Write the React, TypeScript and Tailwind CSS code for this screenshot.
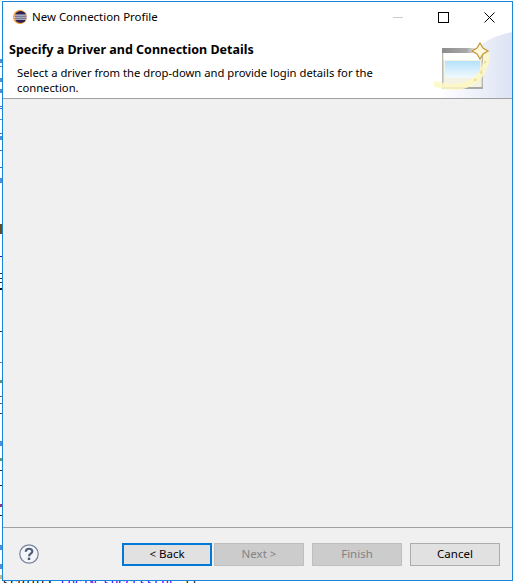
const font = "font-['Noto_Sans','Open_Sans',sans-serif]";

// bits of the editor behind the dialog, showing in the gap left of the window
const behind: { y: number; h: number; color: string }[] = [
  { y: 59, h: 4, color: "#4a90d9" },
  { y: 66, h: 1, color: "#4a90d9" },
  { y: 78, h: 4, color: "#4a90d9" },
  { y: 89, h: 4, color: "#4a90d9" },
  { y: 106, h: 1, color: "#2f6fd0" },
  { y: 108, h: 1, color: "#2f6fd0" },
  { y: 119, h: 1, color: "#4a90d9" },
  { y: 133, h: 1, color: "#2f6fd0" },
  { y: 136, h: 4, color: "#4a90d9" },
  { y: 150, h: 1, color: "#2f6fd0" },
  { y: 167, h: 1, color: "#2f6fd0" },
  { y: 178, h: 5, color: "#4a90d9" },
  { y: 224, h: 10, color: "#6b4a1a" },
  { y: 256, h: 1, color: "#2020c0" },
  { y: 273, h: 1, color: "#333333" },
  { y: 278, h: 1, color: "#333333" },
  { y: 282, h: 1, color: "#333333" },
  { y: 288, h: 2, color: "#111111" },
  { y: 331, h: 1, color: "#333333" },
  { y: 362, h: 1, color: "#777777" },
  { y: 380, h: 3, color: "#5a9a6a" },
  { y: 396, h: 1, color: "#8a5a5a" },
  { y: 403, h: 1, color: "#8a5a5a" },
  { y: 413, h: 1, color: "#7a3a3a" },
  { y: 441, h: 5, color: "#4a90d9" },
  { y: 458, h: 3, color: "#5a9a6a" },
  { y: 470, h: 1, color: "#222222" },
  { y: 485, h: 1, color: "#222222" },
  { y: 504, h: 3, color: "#a0308a" },
  { y: 515, h: 1, color: "#222222" },
  { y: 545, h: 5, color: "#4a90d9" },
  { y: 564, h: 5, color: "#4a90d9" },
  { y: 575, h: 4, color: "#c8b890" },
];

function EclipseIcon() {
  return (
    <svg width="14" height="14" viewBox="0 0 14 14">
      <circle cx="7" cy="7" r="7" fill="#f39a2e" />
      <circle cx="7.6" cy="7" r="6" fill="#2c2255" />
      <rect x="1.5" y="4.6" width="12" height="1" fill="#ffffff" />
      <rect x="1" y="6.6" width="13" height="1" fill="#ffffff" />
      <rect x="1.5" y="8.6" width="12" height="1" fill="#ffffff" />
    </svg>
  );
}

function WizardBanner() {
  return (
    <svg width="78" height="66" viewBox="0 0 78 66">
      <defs>
        <linearGradient id="sky" x1="0" y1="0" x2="0" y2="1">
          <stop offset="0" stopColor="#b5e2fa" />
          <stop offset="1" stopColor="#f2fafe" />
        </linearGradient>
        <linearGradient id="wash" x1="0" y1="0" x2="1" y2="0">
          <stop offset="0" stopColor="#ffffff" />
          <stop offset="1" stopColor="#dde3f4" />
        </linearGradient>
        <linearGradient id="bar" x1="0" y1="0" x2="1" y2="0">
          <stop offset="0" stopColor="#8c8c8c" />
          <stop offset="0.75" stopColor="#a8a8a8" />
          <stop offset="1" stopColor="#e6e6e6" />
        </linearGradient>
      </defs>
      <path d="M78 0 C58 4 44 12 36 24 C28 38 18 52 6 66 L78 66 Z" fill="url(#wash)" />
      <rect x="8" y="16" width="41" height="41" fill="#f3f2e4" />
      <rect x="8" y="16" width="1.5" height="41" fill="#b8b8b4" />
      <rect x="47.5" y="21" width="1.5" height="36" fill="#b8b8b4" />
      <rect x="8" y="55" width="41" height="2" fill="#a8a8a4" />
      <rect x="8" y="16" width="33" height="5" fill="url(#bar)" />
      <rect x="9.5" y="21" width="38" height="7" fill="#ffffff" />
      <rect x="11" y="29" width="35" height="17" fill="url(#sky)" />
      <path d="M1 52 C24 59 50 54 53 24" fill="none" stroke="#fdf8c4" strokeWidth="6" strokeLinecap="round" opacity="0.85" />
      <path d="M47 38 l1.5 3 -3 .5 Z M41 46 l2 2.5 -3.5 .5 Z M51 28 l1.5 3 -3 .5 Z" fill="#ecd98a" />
      <path d="M46 11 L49 16 L54 19 L49 22 L46 27 L43 22 L38 19 L43 16 Z" fill="#fff8dc" stroke="#c49a3a" strokeWidth="1.3" />
    </svg>
  );
}

function HelpIcon() {
  return (
    <svg width="20" height="20" viewBox="0 0 20 20">
      <circle cx="10" cy="10" r="9.2" fill="#f4f5f8" stroke="#75819b" strokeWidth="1.2" />
      <path d="M6.8 7.8 C6.8 3.8 13.3 3.8 13.3 7.4 C13.3 9.6 10 9.6 10 12.2" fill="none" stroke="#4f5d7c" strokeWidth="2.2" />
      <rect x="8.8" y="13.6" width="2.4" height="2.4" fill="#4f5d7c" />
    </svg>
  );
}

function WizardButton({ label, state }: { label: string; state?: "focus" | "disabled" }) {
  let cls = "bg-[#e1e1e1] border border-[#adadad] text-black";
  if (state === "focus") cls = "bg-[#e1e1e1] border-2 border-[#0078d7] text-black";
  if (state === "disabled") cls = "bg-[#cccccc] border border-[#bfbfbf] text-[#838383]";
  return <div className={`w-[90px] h-[23px] flex items-center justify-center text-[11.5px] ${cls}`}>{label}</div>;
}

export default function App() {
  return (
    <div className={`relative w-[513px] h-[583px] bg-white flex flex-col overflow-hidden pt-px ${font}`}>
      {behind.map((b) => (
        <div
          key={b.y}
          className="absolute left-0 w-[2px]"
          style={{ top: b.y, height: b.h, backgroundColor: b.color }}
        />
      ))}

      <div className="relative flex-1 flex flex-col min-h-0 ml-[2px] border border-[#1a86d9] bg-[#f0f0f0]">
        {/* title bar */}
        <div className="h-[30px] bg-white flex items-center pl-[10px] shrink-0">
          <EclipseIcon />
          <span className="ml-[5px] text-[11.45px] text-black">New Connection Profile</span>
          <div className="ml-auto flex items-center">
            <div className="w-[10px] h-px bg-[#cccccc] mr-[35px]" />
            <div className="w-[11px] h-[11px] border border-black mr-[35px]" />
            <svg width="11" height="11" viewBox="0 0 11 11" className="mr-[17px]">
              <path d="M0.5 0.5 L10.5 10.5 M10.5 0.5 L0.5 10.5" stroke="#000000" strokeWidth="1" />
            </svg>
          </div>
        </div>

        {/* banner */}
        <div className="relative h-[67px] bg-white border-b border-[#a0a0a0] shrink-0 pl-[6px] pt-[9px]">
          <div className="text-[12.5px] font-bold leading-[17px] text-black">Specify a Driver and Connection Details</div>
          <div className="relative z-10 ml-[8px] mt-[7px] w-[370px] text-[11.25px] leading-[15px] text-black">
            Select a driver from the drop-down and provide login details for the connection.
          </div>
          <div className="absolute right-0 bottom-0 leading-none">
            <WizardBanner />
          </div>
        </div>

        {/* empty page */}
        <div className="flex-1 min-h-0" />

        {/* button bar */}
        <div className="h-[53px] border-t border-[#a0a0a0] shrink-0 flex items-center pl-[16px] pr-[11px]">
          <HelpIcon />
          <div className="ml-auto flex items-center mr-px">
            <WizardButton label="< Back" state="focus" />
            <div className="ml-[2px]"><WizardButton label="Next >" state="disabled" /></div>
            <div className="ml-[8px]"><WizardButton label="Finish" state="disabled" /></div>
            <div className="ml-[8px]"><WizardButton label="Cancel" /></div>
          </div>
        </div>
      </div>

      {/* console text behind the dialog, only its top edge shows */}
      <div className="h-[2px] shrink-0 overflow-hidden bg-white pl-[3px] font-['Liberation_Mono',monospace] text-[12px] leading-[12px] whitespace-pre">
        <div className="-mt-[2px] text-black">
          SCRIPT: <span className="text-[#2a00ff]">LOGIN SUCCESSFUL</span> ]]
        </div>
      </div>
    </div>
  );
}
